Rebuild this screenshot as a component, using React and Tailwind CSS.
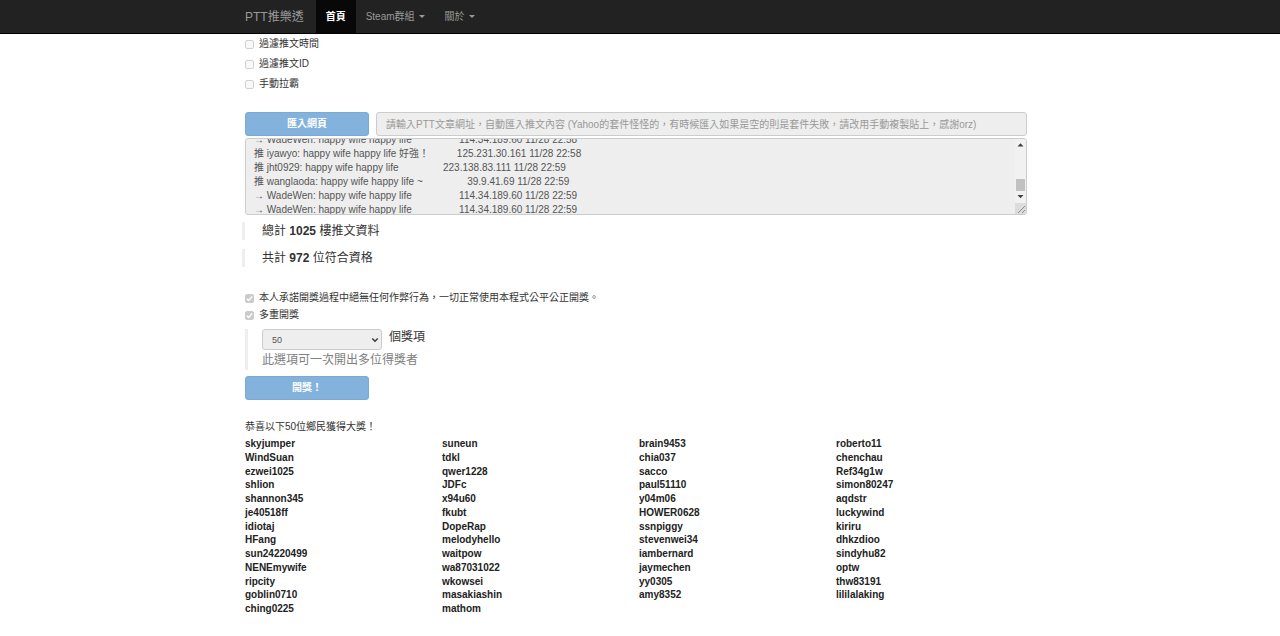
import { useEffect, useRef } from "react";

const WINNERS = [
  ["skyjumper", "WindSuan", "ezwei1025", "shlion", "shannon345", "je40518ff", "idiotaj", "HFang", "sun24220499", "NENEmywife", "ripcity", "goblin0710", "ching0225"],
  ["suneun", "tdkl", "qwer1228", "JDFc", "x94u60", "fkubt", "DopeRap", "melodyhello", "waitpow", "wa87031022", "wkowsei", "masakiashin", "mathom"],
  ["brain9453", "chia037", "sacco", "paul51110", "y04m06", "HOWER0628", "ssnpiggy", "stevenwei34", "iambernard", "jaymechen", "yy0305", "amy8352"],
  ["roberto11", "chenchau", "Ref34g1w", "simon80247", "aqdstr", "luckywind", "kiriru", "dhkzdioo", "sindyhu82", "optw", "thw83191", "lililalaking"],
];

const pad = (n) => " ".repeat(n);

const PUSHES = [
  "→ WadeWen: happy wife happy life" + pad(17) + "114.34.189.60 11/28 22:58",
  "推 iyawyo: happy wife happy life 好強！" + pad(10) + "125.231.30.161 11/28 22:58",
  "推 jht0929: happy wife happy life" + pad(16) + "223.138.83.111 11/28 22:59",
  "推 wanglaoda: happy wife happy life ~" + pad(16) + "39.9.41.69 11/28 22:59",
  "→ WadeWen: happy wife happy life" + pad(17) + "114.34.189.60 11/28 22:59",
  "→ WadeWen: happy wife happy life" + pad(17) + "114.34.189.60 11/28 22:59",
].join("\n");

function Caret() {
  return (
    <svg viewBox="0 0 6 3" className="h-[3px] w-[6px] fill-current" aria-hidden="true">
      <path d="M0 0h6L3 3z" />
    </svg>
  );
}

function Check({ children, checked = false }) {
  return (
    <label className="flex h-[14px] items-center gap-[5px]">
      <span className="grid shrink-0">
        <input
          type="checkbox"
          disabled
          defaultChecked={checked}
          className="peer col-start-1 row-start-1 size-[9px] appearance-none rounded-[2px] border border-[#d2d2d2] bg-[#f8f8f8] checked:border-[#cbcbcb] checked:bg-[#cbcbcb]"
        />
        <svg viewBox="0 0 9 9" className="col-start-1 row-start-1 hidden size-[9px] fill-none stroke-white peer-checked:block" aria-hidden="true">
          <path d="M1.8 4.7 3.7 6.5 7.2 2.4" strokeWidth="1.3" />
        </svg>
      </span>
      {children}
    </label>
  );
}

function PrimaryButton({ children }) {
  return (
    <button
      type="button"
      disabled
      className="h-[24px] w-[124px] shrink-0 rounded-[3px] border border-[#357ebd] bg-[#428bca] font-bold text-white opacity-65"
    >
      {children}
    </button>
  );
}

function PushLog() {
  const ref = useRef(null);
  useEffect(() => {
    ref.current.scrollTop = 10;
  }, []);
  return (
    <div className="mt-[2px] flex h-[77px] overflow-hidden rounded-[3px] border border-[#ccc] bg-[#eee]">
      <textarea
        ref={ref}
        disabled
        aria-label="推文內容"
        defaultValue={PUSHES}
        className="min-w-0 flex-1 resize-none overflow-hidden whitespace-pre px-[8px] py-[4px] leading-[14px] text-[#555]"
      />
      <div className="flex w-[11px] flex-col items-center bg-[#f1f1f1] text-[#404040]" aria-hidden="true">
        <svg viewBox="0 0 11 11" className="size-[11px] fill-current">
          <path d="M2.500 7.500h6L5.500 4.200z" />
        </svg>
        <span className="mt-[29px] h-[12px] w-[9px] bg-[#c1c1c1]" />
        <svg viewBox="0 0 11 11" className="size-[11px] fill-current">
          <path d="M2.500 4h6L5.500 7.300z" />
        </svg>
        <svg viewBox="0 0 11 11" className="mt-auto h-[11px] w-[11px] bg-[#dcdcdc] stroke-[#777]">
          <path d="M3 10 10 3M7 10l3-3" strokeWidth="0.8" />
        </svg>
      </div>
    </div>
  );
}

export default function App() {
  return (
    <div className="bg-white font-['Liberation_Sans','Noto_Sans_CJK_TC',sans-serif] text-[10px] leading-[14px] text-[#333]">
      <header className="border-b border-black bg-[#222] pr-2">
        <nav className="mx-auto flex h-[33px] max-w-[782px] items-stretch text-[#999]">
          <a href="#top" className="flex items-center pr-[12px] text-[12px]">PTT推樂透</a>
          <a href="#home" className="flex items-center bg-[#080808] px-[10px] font-bold text-white">首頁</a>
          <a href="#steam" className="flex items-center gap-[4px] px-[10px]">Steam群組 <Caret /></a>
          <a href="#about" className="flex items-center gap-[4px] px-[10px]">關於 <Caret /></a>
        </nav>
      </header>

      <div className="pr-2">
        <main className="mx-auto max-w-[782px] pt-[3px]">
          <div className="flex flex-col items-start gap-[6px]">
            <Check>過濾推文時間</Check>
            <Check>過濾推文ID</Check>
            <Check>手動拉霸</Check>
          </div>

          <div className="mt-[21px] flex gap-[7px]">
            <PrimaryButton>匯入網頁</PrimaryButton>
            <input
              type="text"
              disabled
              aria-label="PTT文章網址"
              placeholder="請輸入PTT文章網址，自動匯入推文內容 (Yahoo的套件怪怪的，有時候匯入如果是空的則是套件失敗，請改用手動複製貼上，感謝orz)"
              className="h-[24px] min-w-0 flex-1 rounded-[3px] border border-[#ccc] bg-[#eee] px-[9px] placeholder:text-[#999]"
            />
          </div>

          <PushLog />

          <blockquote className="-ml-[3px] mt-[7px] border-l-[3px] border-[#eee] pl-[17px] text-[12px] leading-[18px]">
            總計 <b>1025</b> 樓推文資料
          </blockquote>
          <blockquote className="-ml-[3px] mt-[9px] border-l-[3px] border-[#eee] pl-[17px] text-[12px] leading-[18px]">
            共計 <b>972</b> 位符合資格
          </blockquote>

          <div className="mt-[24px] flex flex-col items-start gap-[3px]">
            <Check checked>本人承諾開獎過程中絕無任何作弊行為，一切正常使用本程式公平公正開獎。</Check>
            <Check checked>多重開獎</Check>
          </div>

          <blockquote className="mt-[7px] border-l-[3px] border-[#eee] pl-[14px] text-[12px]">
            <label className="flex gap-[7px]">
              <span className="grid w-[120px] items-center">
                <select
                  disabled
                  defaultValue="50"
                  className="col-start-1 row-start-1 h-[21px] appearance-none rounded-[3px] border border-[#ccc] bg-[#eee] px-[9px] text-[9px] text-[#555] opacity-100"
                >
                  <option>50</option>
                </select>
                <svg viewBox="0 0 8 6" className="col-start-1 row-start-1 mr-[3px] h-[6px] w-[8px] justify-self-end fill-none stroke-[#333]" aria-hidden="true">
                  <path d="M1.300 1.500 4 4.200 6.700 1.500" strokeWidth="1.400" />
                </svg>
              </span>
              <span className="leading-[16px]">個獎項</span>
            </label>
            <p className="leading-[20px] text-[#808080]">此選項可一次開出多位得獎者</p>
          </blockquote>

          <div className="mt-[6px]">
            <PrimaryButton>開獎！</PrimaryButton>
          </div>

          <p className="mt-[20px]">恭喜以下50位鄉民獲得大獎！</p>
          <div className="-mr-[6px] mt-[3px] grid grid-cols-4 pb-[20px] font-bold text-[#222]">
            {WINNERS.map((column) => (
              <ul key={column[0]} className="grid h-[179px] grid-rows-13">
                {column.map((name) => (
                  <li key={name}>{name}</li>
                ))}
              </ul>
            ))}
          </div>
        </main>
      </div>
    </div>
  );
}
